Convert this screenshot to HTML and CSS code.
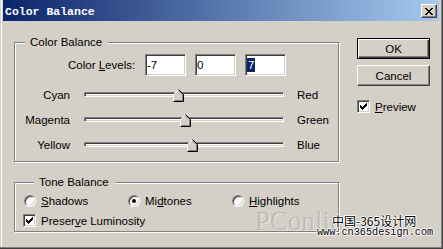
FILE: index.html
```html
<!DOCTYPE html>
<html>
<head>
    <link rel="stylesheet" href="styles.css">
</head>
<body>
<div class="window">
    <div class="titlebar">
        <span class="title">Color Balance</span>
        <div class="close-btn">
            <!-- крестик -->
            <svg width="8" height="7" viewBox="0 0 8 7">
                <path d="M0 0h2v1H0z M6 0h2v1H6z M1 1h2v1H1z M5 1h2v1H5z M2 2h4v1H2z M3 3h2v1H3z M2 4h4v1H2z M1 5h2v1H1z M5 5h2v1H5z M0 6h2v1H0z M6 6h2v1H6z" fill="#000"/>
            </svg>
        </div>
    </div>

    <div class="dialog">
        <div class="left">
            <fieldset class="group">
                <legend>Color Balance</legend>
                <div class="levels">
                    <span class="levels-label">Color <u>L</u>evels:</span>
                    <div class="field">-7</div>
                    <div class="field">0</div>
                    <div class="field"><span class="sel">7</span></div>
                </div>
                <div class="sliders">
                    <span class="lbl-left">Cyan</span>
                    <div class="track">
                        <svg class="thumb" style="left: 88px" width="11" height="13" viewBox="0 0 11 13">
                            <use href="#thumb"/>
                        </svg>
                    </div>
                    <span class="lbl-right">Red</span>

                    <span class="lbl-left">Magenta</span>
                    <div class="track">
                        <svg class="thumb" style="left: 95px" width="11" height="13" viewBox="0 0 11 13">
                            <use href="#thumb"/>
                        </svg>
                    </div>
                    <span class="lbl-right">Green</span>

                    <span class="lbl-left">Yellow</span>
                    <div class="track">
                        <svg class="thumb" style="left: 102px" width="11" height="13" viewBox="0 0 11 13">
                            <use href="#thumb"/>
                        </svg>
                    </div>
                    <span class="lbl-right">Blue</span>
                </div>
            </fieldset>

            <fieldset class="group tone">
                <legend>Tone Balance</legend>
                <div class="radios">
                    <div class="radio"><span class="radio-box"></span><span><u>S</u>hadows</span></div>
                    <div class="radio"><span class="radio-box checked"></span><span>Mi<u>d</u>tones</span></div>
                    <div class="radio"><span class="radio-box"></span><span><u>H</u>ighlights</span></div>
                </div>
                <div class="check luminosity">
                    <span class="check-box">
                        <svg width="7" height="7" viewBox="0 0 7 7"><use href="#tick"/></svg>
                    </span>
                    <span>Preser<u>v</u>e Luminosity</span>
                </div>
            </fieldset>
        </div>

        <div class="right">
            <div class="btn default"><span>OK</span></div>
            <div class="btn">Cancel</div>
            <div class="check preview">
                <span class="check-box">
                    <svg width="7" height="7" viewBox="0 0 7 7"><use href="#tick"/></svg>
                </span>
                <span><u>P</u>review</span>
            </div>
        </div>
    </div>

    <!-- водяной знак -->
    <div class="watermark">
        <span class="wm-logo">PConline</span>
        <span class="wm-cn">中国-365设计网</span>
        <span class="wm-url">www.cn365design.com</span>
    </div>
</div>

<svg width="0" height="0" style="position: absolute">
    <defs>
        <g id="thumb">
            <path d="M5.5 0.5 L10.5 5.5 L10.5 12.5 L0.5 12.5 L0.5 5.5 Z" fill="#d4d0c8"/>
            <path d="M0.5 12 L0.5 5.5 L5.5 0.5" fill="none" stroke="#fff"/>
            <path d="M1.5 11.5 L9.5 11.5 L9.5 5.9 L5.5 1.9" fill="none" stroke="#808080"/>
            <path d="M5.5 0.5 L10.5 5.5 L10.5 12.5 L0.5 12.5" fill="none" stroke="#000"/>
        </g>
        <path id="tick" d="M6 0h1v1H6z M5 1h2v1H5z M0 2h1v1H0z M4 2h3v1H4z M0 3h2v1H0z M3 3h3v1H3z M0 4h5v1H0z M1 5h3v1H1z M2 6h1v1H2z" fill="#000"/>
    </defs>
</svg>
</body>
</html>
```

FILE: styles.css
```css
body {
    margin: 0;
    font-family: "Liberation Sans", Arial, sans-serif;
    font-size: 11.5px;
    color: #000;
}

.window {
    position: relative;
    width: 443px;
    height: 249px;
    box-sizing: border-box;
    padding: 0 4px 0 3px;
    background-color: #d4d0c8;
    box-shadow: inset -1px -1px #404040, inset -2px -2px #808080, inset 1px 0 #d4d0c8, inset 2px 0 #fff;
    overflow: hidden;
}

/* заголовок окна */
.titlebar {
    display: flex;
    align-items: center;
    justify-content: space-between;
    height: 21px;
    padding: 0 2px 0 2px;
    background: linear-gradient(to right, #0a246a, #a6caf0);
}

.title {
    font-family: "Liberation Mono", monospace;
    font-weight: bold;
    font-size: 11.5px;
    color: #fff;
    margin-top: 1px;
}

.close-btn {
    display: flex;
    align-items: center;
    justify-content: center;
    width: 16px;
    height: 14px;
    box-sizing: border-box;
    margin-top: 1px;
    padding-top: 1px;
    background-color: #d4d0c8;
    border: 1px solid;
    border-color: #fff #404040 #404040 #fff;
    box-shadow: inset -1px -1px #808080;
}

.dialog {
    display: flex;
    padding: 15px 0 0 11px;
}

.left {
    width: 325px;
}

.group {
    margin: 0;
    padding: 5px 0 4px 0;
    border: 1px solid #808080;
    box-shadow: inset 1px 1px #fff, 1px 1px #fff;
    min-inline-size: 0;
}

.group legend {
    margin-left: 10px;
    padding: 0 6px 0 5px;
    line-height: 13px;
    background-color: #d4d0c8;
}

.levels {
    display: flex;
    align-items: center;
    gap: 9px;
    padding-left: 53px;
    height: 22px;
}

.levels-label {
    width: 68px;
}

.field {
    width: 41px;
    height: 22px;
    box-sizing: border-box;
    padding-left: 1px;
    line-height: 20px;
    background-color: #fff;
    border: 1px solid;
    border-color: #808080 #fff #fff #808080;
    box-shadow: inset 1px 1px #404040, inset -1px -1px #d4d0c8;
}

.sel {
    display: inline-block;
    padding: 0 1px;
    line-height: 14px;
    background-color: #0a246a;
    color: #fff;
}

.sliders {
    display: grid;
    grid-template-columns: 55px 200px auto;
    grid-auto-rows: 25px;
    column-gap: 14px;
    align-items: center;
    margin-top: 6px;
}

.lbl-left {
    text-align: right;
}

.lbl-right {
    margin-left: -1px;
}

.track {
    position: relative;
    height: 5px;
    box-sizing: border-box;
    margin-top: -1px;
    background-color: #fff;
    border: 1px solid;
    border-color: #808080 #fff #fff #808080;
    box-shadow: inset 1px 1px #404040, inset -1px -1px #d4d0c8;
}

.thumb {
    position: absolute;
    top: -4px;
}

.tone {
    margin-top: 14px;
    padding-left: 9px;
}

.radios {
    display: flex;
    height: 13px;
}

.radio {
    display: flex;
    align-items: center;
    gap: 5px;
    width: 104px;
}

.radio-box {
    position: relative;
    width: 12px;
    height: 12px;
    box-sizing: border-box;
    border-radius: 50%;
    background-color: #fff;
    border: 1px solid;
    border-color: #808080 #fff #fff #808080;
    box-shadow: inset 1px 1px #404040, inset -1px -1px #d4d0c8;
}

.radio-box.checked::after {
    content: "";
    position: absolute;
    left: 3px;
    top: 3px;
    width: 4px;
    height: 4px;
    border-radius: 50%;
    background-color: #000;
}

.check {
    display: flex;
    align-items: center;
    gap: 5px;
    height: 13px;
}

.check-box {
    display: flex;
    align-items: center;
    justify-content: center;
    width: 13px;
    height: 13px;
    box-sizing: border-box;
    background-color: #fff;
    border: 1px solid;
    border-color: #808080 #fff #fff #808080;
    box-shadow: inset 1px 1px #404040, inset -1px -1px #d4d0c8;
}

.luminosity {
    margin: 7px 0 0 -1px;
}

.right {
    display: flex;
    flex-direction: column;
    margin-left: 18px;
    padding-top: 2px;
}

.btn {
    display: flex;
    align-items: center;
    justify-content: center;
    width: 73px;
    height: 21px;
    box-sizing: border-box;
    border: 1px solid;
    border-color: #fff #404040 #404040 #fff;
    box-shadow: inset -1px -1px #808080;
    margin-bottom: 6px;
}

.btn.default {
    border: 1px solid #000;
    box-shadow: inset 1px 1px #fff, inset -1px -1px #404040, inset -2px -2px #808080;
}

.preview {
    margin-top: 8px;
}

/* водяной знак */
.watermark .wm-logo {
    position: absolute;
    left: 255px;
    top: 206px;
    font-family: "Liberation Serif", serif;
    font-size: 27px;
    color: rgba(90, 90, 90, 0.22);
    text-shadow: 1px 1px rgba(255, 255, 255, 0.4);
}

.watermark .wm-cn {
    position: absolute;
    left: 332px;
    top: 214px;
    font-family: "Noto Sans CJK SC", sans-serif;
    font-size: 12px;
    line-height: 14px;
    color: #000;
    text-shadow: 1px 0 #fff, -1px 0 #fff, 0 1px #fff, 0 -1px #fff;
}

.watermark .wm-url {
    position: absolute;
    left: 317px;
    top: 227px;
    font-family: "Liberation Mono", monospace;
    font-size: 10.2px;
    line-height: 12px;
    color: #000;
    text-shadow: 1px 0 #fff, -1px 0 #fff, 0 1px #fff, 0 -1px #fff;
}
```
